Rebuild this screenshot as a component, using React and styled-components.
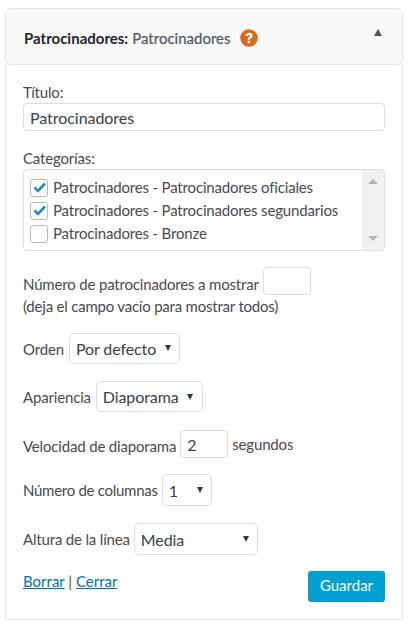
import React from "react";
import styled, { createGlobalStyle } from "styled-components";

const GlobalStyle = createGlobalStyle`
  html, body {
    margin: 0;
    padding: 0;
    background: #fff;
  }
  body {
    font-family: Lato, "Open Sans", sans-serif;
    font-size: 15px;
    letter-spacing: -0.17px;
    color: #4a4a4a;
  }
`;

const Page = styled.div`
  width: 409px;
  height: 627px;
  padding: 8px 6px 0 5px;
  box-sizing: border-box;
`;

const Widget = styled.div`
  display: flex;
  flex-direction: column;
  height: 612px;
`;

const Header = styled.div`
  display: flex;
  justify-content: space-between;
  height: 57px;
  box-sizing: border-box;
  padding: 19px 20px 0 18px;
  background: #f9f9f9;
  border: 1px solid #e5e5e5;
  border-radius: 6px;
`;

const Title = styled.h3`
  display: flex;
  align-items: center;
  height: 20px;
  margin: 0;
  font-size: 15px;
  font-weight: 700;
  letter-spacing: 0;
  color: #23282d;
`;

const TitleNote = styled.span`
  margin-left: 4px;
  font-weight: 400;
  color: #50575e;
  -webkit-text-stroke: 0.2px #50575e;
`;

const HelpIcon = styled.svg`
  width: 18px;
  height: 18px;
  margin-left: 10px;
`;

const Toggle = styled.span`
  width: 0;
  height: 0;
  margin-top: 1px;
  border-left: 4.5px solid transparent;
  border-right: 4.5px solid transparent;
  border-bottom: 7px solid #50575e;
`;

const Body = styled.div`
  flex: 1;
  display: flex;
  flex-direction: column;
  padding: 18px 17px 0 17px;
  margin-top: -1px;
  border: 1px solid #e5e5e5;
  border-top: none;
  box-sizing: border-box;
`;

const Label = styled.div`
  line-height: 20px;
  height: 20px;
  margin: ${(p) => p.$top || 0}px 0 1px;
`;

const TextInput = styled.input`
  box-sizing: border-box;
  width: ${(p) => p.$width || "100%"};
  height: 28px;
  padding: 0 6px;
  margin: ${(p) => p.$margin || 0};
  border: 1px solid #ddd;
  border-radius: 4px;
  background: #fff;
  font-family: inherit;
  font-size: 16px;
  letter-spacing: -0.05px;
  color: #3a4046;
  outline: none;
`;

const CheckList = styled.div`
  display: flex;
  justify-content: space-between;
  box-sizing: border-box;
  height: 82px;
  margin-bottom: 16px;
  border: 1px solid #ddd;
  border-radius: 4px;
  overflow: hidden;
`;

const Items = styled.div`
  display: flex;
  flex-direction: column;
  padding: 5px 0 0 6px;
`;

const Item = styled.div`
  display: flex;
  align-items: center;
  height: 23px;
`;

const Box = styled.span`
  position: relative;
  flex: none;
  width: 16px;
  height: 16px;
  margin: 2px 5px 0 0;
  border: 1px solid #b4b9be;
  border-radius: 3px;
  background: #fff;
`;

const Tick = styled.svg`
  position: absolute;
  left: 2px;
  top: 1px;
  width: 13px;
  height: 13px;
`;

const Scrollbar = styled.div`
  display: flex;
  flex-direction: column;
  justify-content: space-between;
  align-items: center;
  width: 22px;
  padding: 9px 0;
  box-sizing: border-box;
  background: #f0f0f0;
`;

const ScrollArrow = styled.span`
  width: 0;
  height: 0;
  border-left: 5px solid transparent;
  border-right: 5px solid transparent;
  ${(p) => (p.$down ? "border-top" : "border-bottom")}: 5px solid #b5b5b5;
`;

const Row = styled.div`
  display: flex;
  align-items: center;
  height: ${(p) => p.$height || 32}px;
  margin-bottom: ${(p) => p.$after || 0}px;
  letter-spacing: ${(p) => p.$spacing || "inherit"};
  white-space: pre;
`;

const RowText = styled.span`
  padding-top: ${(p) => p.$drop || 0}px;
`;

const Note = styled.div`
  line-height: 20px;
  height: 20px;
  margin: 1px 0 17px;
  letter-spacing: -0.21px;
`;

const SelectWrap = styled.div`
  position: relative;
  margin-left: ${(p) => p.$left || 4}px;
  width: ${(p) => p.$width}px;
`;

const Select = styled.select`
  display: block;
  appearance: none;
  box-sizing: border-box;
  width: 100%;
  height: ${(p) => p.$height || 31}px;
  padding: 0 0 0 6px;
  border: 1px solid #ddd;
  border-radius: 5px;
  background: #fff;
  font-family: inherit;
  font-size: 16px;
  letter-spacing: -0.1px;
  color: #3a4046;
  outline: none;
`;

const Caret = styled.span`
  position: absolute;
  right: ${(p) => p.$right || 9}px;
  top: ${(p) => p.$top || 13}px;
  width: 0;
  height: 0;
  border-left: 3px solid transparent;
  border-right: 3px solid transparent;
  border-top: 6px solid #32373c;
  pointer-events: none;
`;

const Footer = styled.div`
  display: flex;
  justify-content: space-between;
  align-items: flex-start;
  margin-top: 16px;
`;

const Links = styled.div`
  line-height: 20px;
  letter-spacing: 0;
`;

const FooterLink = styled.a`
  color: #0073aa;
  text-decoration: underline;
`;

const SaveButton = styled.button`
  width: 77px;
  height: 31px;
  padding: 0 0 3px;
  border: none;
  border-radius: 3px;
  background: #00a0d2;
  color: #fff;
  font-family: inherit;
  font-size: 15px;
`;

const Picker = ({ value, width, height, left, right, top }) => (
  <SelectWrap $width={width} $left={left}>
    <Select defaultValue={value} $height={height}>
      <option>{value}</option>
    </Select>
    <Caret $right={right} $top={top} />
  </SelectWrap>
);

const CheckItem = ({ checked, children }) => (
  <Item>
    <Box>
      {checked && (
        <Tick viewBox="0 0 13 13">
          <path d="M1.5 6.5 L5 10 L12 2.5" fill="none" stroke="#1e8cbe" strokeWidth="2.6" />
        </Tick>
      )}
    </Box>
    {children}
  </Item>
);

export default function App() {
  return (
    <Page>
      <GlobalStyle />
      <Widget>
        <Header>
          <Title>
            Patrocinadores:
            <TitleNote>Patrocinadores</TitleNote>
            <HelpIcon viewBox="0 0 18 18">
              <circle cx="9" cy="9" r="8.8" fill="#dd6a1b" />
              <path d="M5.7 7 C5.7 5 7.2 3.7 9.1 3.7 C11.1 3.7 12.5 5 12.5 6.7 C12.5 9 10 8.9 10 10.8 L7.8 10.8 C7.8 8 10.1 8 10.1 6.8 C10.1 6.2 9.7 5.9 9.1 5.9 C8.4 5.9 8 6.3 8 7 Z" fill="#fff" />
              <rect x="7.8" y="11.7" width="2.3" height="2.4" fill="#fff" />
            </HelpIcon>
          </Title>
          <Toggle />
        </Header>
        <Body>
          <Label>Título:</Label>
          <TextInput defaultValue="Patrocinadores" />
          <Label $top={17}>Categorías:</Label>
          <CheckList>
            <Items>
              <CheckItem checked>Patrocinadores - Patrocinadores oficiales</CheckItem>
              <CheckItem checked>Patrocinadores - Patrocinadores segundarios</CheckItem>
              <CheckItem>Patrocinadores - Bronze</CheckItem>
            </Items>
            <Scrollbar>
              <ScrollArrow />
              <ScrollArrow $down />
            </Scrollbar>
          </CheckList>
          <Row $height={28}>
            <RowText $drop={6}>Número de patrocinadores a mostrar</RowText>
            <TextInput $width="48px" $margin="0 0 0 4px" />
          </Row>
          <Note>(deja el campo vacío para mostrar todos)</Note>
          <Row $height={31} $after={17}>
            <RowText>Orden</RowText>
            <Picker value="Por defecto" width={111} left={5} top={12} />
          </Row>
          <Row $height={31} $after={18}>
            <RowText>Apariencia</RowText>
            <Picker value="Diaporama" width={107} left={5} right={10} />
          </Row>
          <Row $height={28} $after={16}>
            <RowText $drop={4}>Velocidad de diaporama</RowText>
            <TextInput $width="48px" $margin="0 4px" defaultValue="2" />
            <RowText>segundos</RowText>
          </Row>
          <Row $height={32} $after={17} $spacing="-0.28px">
            <RowText>Número de columnas</RowText>
            <Picker value="1" width={50} height={32} />
          </Row>
          <Row $height={32}>
            <RowText>Altura de la línea</RowText>
            <Picker value="Media" width={124} height={32} />
          </Row>
          <Footer>
            <Links>
              <FooterLink href="#">Borrar</FooterLink> | <FooterLink href="#">Cerrar</FooterLink>
            </Links>
            <SaveButton>Guardar</SaveButton>
          </Footer>
        </Body>
      </Widget>
    </Page>
  );
}
